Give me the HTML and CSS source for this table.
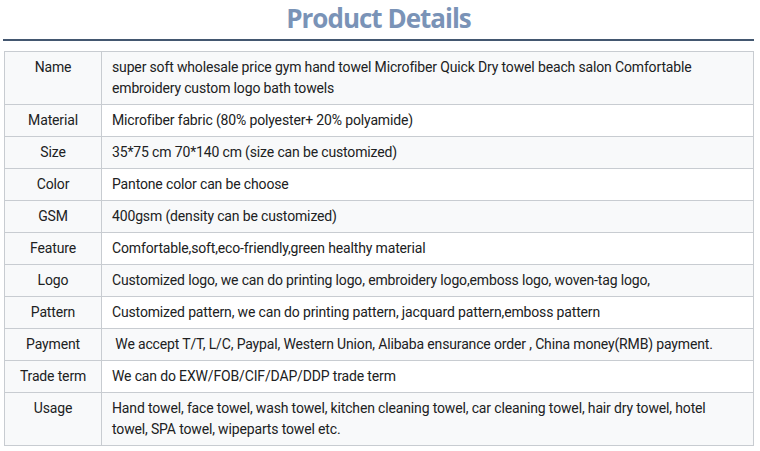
FILE: index.html
```html
<!DOCTYPE html>
<html>
<head>
<meta charset="utf-8">
<link rel="stylesheet" href="styles.css">
</head>
<body>
<div class="page">
  <h2 class="title">Product Details</h2>
  <div class="rule"></div>
  <table class="specs">
    <tr class="alt"><th>Name</th><td>super soft wholesale price gym hand towel Microfiber Quick Dry towel beach salon Comfortable embroidery custom logo bath towels</td></tr>
    <tr><th>Material</th><td>Microfiber fabric (80% polyester+ 20% polyamide)</td></tr>
    <tr class="alt"><th>Size</th><td>35*75 cm 70*140 cm (size can be customized)</td></tr>
    <tr><th>Color</th><td>Pantone color can be choose</td></tr>
    <tr class="alt"><th>GSM</th><td>400gsm (density can be customized)</td></tr>
    <tr><th>Feature</th><td>Comfortable,soft,eco-friendly,green healthy material</td></tr>
    <tr class="alt"><th>Logo</th><td>Customized logo, we can do printing logo, embroidery logo,emboss logo, woven-tag logo,</td></tr>
    <tr><th>Pattern</th><td>Customized pattern, we can do printing pattern, jacquard pattern,emboss pattern</td></tr>
    <tr class="alt"><th>Payment</th><td>&nbsp;We accept T/T, L/C, Paypal, Western Union, Alibaba ensurance order , China money(RMB) payment.</td></tr>
    <tr><th>Trade term</th><td>We can do EXW/FOB/CIF/DAP/DDP trade term</td></tr>
    <tr class="alt"><th>Usage</th><td>Hand towel, face towel, wash towel, kitchen cleaning towel, car cleaning towel, hair dry towel, hotel towel, SPA towel, wipeparts towel etc.</td></tr>
  </table>
</div>
</body>
</html>
```
FILE: styles.css
```css
html, body { margin: 0; padding: 0; background: #fff; }
.page { padding: 0 6px 0 3px; }
.title {
  margin: 0;
  padding-top: 2px;
  height: 37px;
  text-align: center;
  font-family: "Open Sans", sans-serif;
  font-weight: 700;
  font-size: 26px;
  line-height: 32px;
  letter-spacing: -1px;
  color: #7a93b7;
}
.rule { height: 2px; background: #435770; }
.specs {
  margin: 10px 0 0 1px;
  width: 750px;
  border-collapse: collapse;
  font-family: Roboto, "Noto Sans", sans-serif;
  font-size: 14px;
  line-height: 21px;
  letter-spacing: -0.15px;
  color: #202122;
}
.specs th, .specs td {
  border: 1px solid #c8ccd1;
  padding: 5px 10px 5px 10px;
  vertical-align: top;
}
.specs th {
  width: 76px;
  font-weight: 400;
  text-align: center;
  background: #f8f9fa;
}
.specs td { background: #fff; text-align: left; }
.specs tr.alt td { background: #f8f9fa; }
```
